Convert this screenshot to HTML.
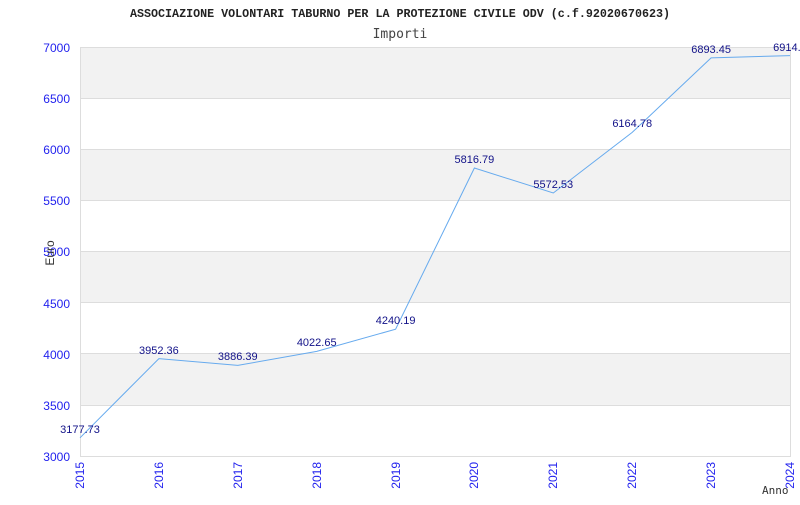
<!DOCTYPE html><html><head><style>body{margin:0;background:#fff}</style></head><body>
<svg width="800" height="500" xmlns="http://www.w3.org/2000/svg" font-family="Liberation Sans, sans-serif">
<rect width="800" height="500" fill="#fff"/>
<g fill="#f2f2f2"><rect x="80" y="47" width="710" height="51.1"/><rect x="80" y="149.2" width="710" height="51.1"/><rect x="80" y="251.5" width="710" height="51.1"/><rect x="80" y="353.8" width="710" height="51.1"/></g>
<g stroke="#dddddd" stroke-width="1"><line x1="80" y1="47.5" x2="790" y2="47.5"/><line x1="80" y1="98.5" x2="790" y2="98.5"/><line x1="80" y1="149.5" x2="790" y2="149.5"/><line x1="80" y1="200.5" x2="790" y2="200.5"/><line x1="80" y1="251.5" x2="790" y2="251.5"/><line x1="80" y1="302.5" x2="790" y2="302.5"/><line x1="80" y1="353.5" x2="790" y2="353.5"/><line x1="80" y1="405.5" x2="790" y2="405.5"/><line x1="80" y1="456.5" x2="790" y2="456.5"/><line x1="80.5" y1="47" x2="80.5" y2="457"/><line x1="790.5" y1="47" x2="790.5" y2="457"/></g>
<text x="400" y="17" text-anchor="middle" font-family="Liberation Mono, monospace" font-weight="bold" font-size="11.7" fill="#222">ASSOCIAZIONE VOLONTARI TABURNO PER LA PROTEZIONE CIVILE ODV (c.f.92020670623)</text>
<text x="400" y="38" text-anchor="middle" font-family="DejaVu Sans Mono, monospace" font-size="13" fill="#444">Importi</text>
<g fill="#2222ee" font-size="12" text-anchor="end"><text x="70" y="52">7000</text><text x="70" y="103">6500</text><text x="70" y="154">6000</text><text x="70" y="205">5500</text><text x="70" y="256">5000</text><text x="70" y="308">4500</text><text x="70" y="359">4000</text><text x="70" y="410">3500</text><text x="70" y="461">3000</text></g>
<text transform="translate(54,253) rotate(-90)" text-anchor="middle" font-size="12" fill="#333">Euro</text>
<text x="762" y="494" font-family="DejaVu Sans Mono, monospace" font-size="11" fill="#333">Anno</text>
<g fill="#2222ee" font-size="12" text-anchor="end">
<text transform="translate(84,462) rotate(-90)">2015</text><text transform="translate(163,462) rotate(-90)">2016</text><text transform="translate(242,462) rotate(-90)">2017</text><text transform="translate(321,462) rotate(-90)">2018</text><text transform="translate(400,462) rotate(-90)">2019</text><text transform="translate(478,462) rotate(-90)">2020</text><text transform="translate(557,462) rotate(-90)">2021</text><text transform="translate(636,462) rotate(-90)">2022</text><text transform="translate(715,462) rotate(-90)">2023</text><text transform="translate(794,462) rotate(-90)">2024</text></g>
<polyline fill="none" stroke="#66aaee" stroke-width="1" points="80,437.8 158.9,358.6 237.8,365.4 316.7,351.4 395.6,329.2 474.4,168 553.3,193 632.2,132.4 711.1,57.9 790,55.6"/>
<g fill="#111188" font-size="11" text-anchor="middle">
<text x="80" y="433">3177.73</text><text x="158.9" y="354">3952.36</text><text x="237.8" y="360">3886.39</text><text x="316.7" y="346">4022.65</text><text x="395.6" y="324">4240.19</text><text x="474.4" y="163">5816.79</text><text x="553.3" y="188">5572.53</text><text x="632.2" y="127">6164.78</text><text x="711.1" y="53">6893.45</text><text x="790" y="51">6914.6</text></g>
</svg></body></html>
